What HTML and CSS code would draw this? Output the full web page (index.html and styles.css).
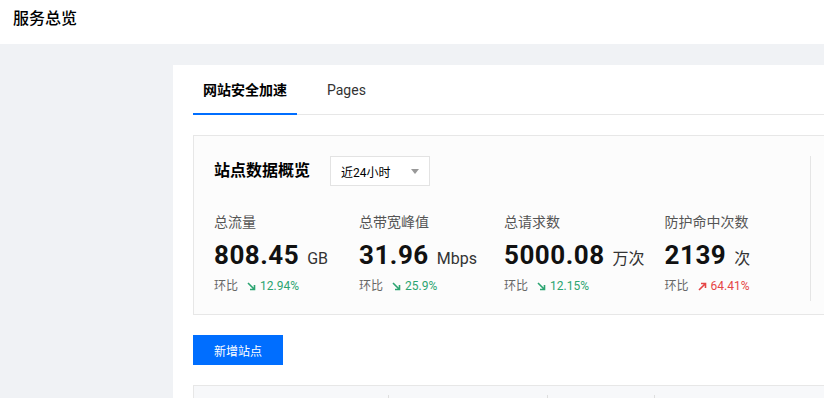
FILE: index.html
```html
<!DOCTYPE html>
<html lang="zh-CN">
<head>
    <meta charset="UTF-8">
    <meta name="viewport" content="width=device-width, initial-scale=1.0">
    <title>服务总览</title>
    <link rel="stylesheet" href="styles.css">
</head>
<body>

    <header class="topbar">
        <h1>服务总览</h1>
    </header>

    <main class="content">
        <div class="panel">
            <div class="tabs">
                <div class="tab active">网站安全加速</div>
                <div class="tab">Pages</div>
            </div>

            <section class="overview">
                <div class="overview-main">
                    <div class="overview-head">
                        <h2>站点数据概览</h2>
                        <div class="select">
                            <span>近24小时</span>
                            <span class="caret"></span>
                        </div>
                    </div>

                    <div class="stats">
                        <div class="stat">
                            <div class="stat-label">总流量</div>
                            <div class="stat-value">808.45<span class="unit">GB</span></div>
                            <div class="stat-change">环比
                                <span class="trend down">
                                    <svg width="9" height="9" viewBox="0 0 9 9"><path d="M1 1L7.5 7.5M3 7.5H7.5V3" fill="none" stroke="currentColor" stroke-width="1.6"/></svg>12.94%
                                </span>
                            </div>
                        </div>
                        <div class="stat">
                            <div class="stat-label">总带宽峰值</div>
                            <div class="stat-value">31.96<span class="unit">Mbps</span></div>
                            <div class="stat-change">环比
                                <span class="trend down">
                                    <svg width="9" height="9" viewBox="0 0 9 9"><path d="M1 1L7.5 7.5M3 7.5H7.5V3" fill="none" stroke="currentColor" stroke-width="1.6"/></svg>25.9%
                                </span>
                            </div>
                        </div>
                        <div class="stat">
                            <div class="stat-label">总请求数</div>
                            <div class="stat-value">5000.08<span class="unit">万次</span></div>
                            <div class="stat-change">环比
                                <span class="trend down">
                                    <svg width="9" height="9" viewBox="0 0 9 9"><path d="M1 1L7.5 7.5M3 7.5H7.5V3" fill="none" stroke="currentColor" stroke-width="1.6"/></svg>12.15%
                                </span>
                            </div>
                        </div>
                        <div class="stat">
                            <div class="stat-label">防护命中次数</div>
                            <div class="stat-value">2139<span class="unit">次</span></div>
                            <div class="stat-change">环比
                                <span class="trend up">
                                    <svg width="9" height="9" viewBox="0 0 9 9"><path d="M1 8L7.5 1.5M3 1.5H7.5V6" fill="none" stroke="currentColor" stroke-width="1.6"/></svg>64.41%
                                </span>
                            </div>
                        </div>
                    </div>
                </div>
                <div class="overview-side"></div>
            </section>

            <button class="btn-primary">新增站点</button>

            <div class="table">
                <div class="table-head">
                    <div class="th th-1"></div>
                    <div class="th th-2"></div>
                    <div class="th th-3"></div>
                    <div class="th th-4"></div>
                </div>
            </div>
        </div>
    </main>

</body>
</html>
```

FILE: styles.css
```css
/* Global Styles */
body {
    font-family: 'Roboto', 'Noto Sans CJK SC', sans-serif;
    margin: 0;
    padding: 0;
    background: #f0f2f5;
    color: #000;
    overflow: hidden;
    width: 824px;
    height: 398px;
}

.topbar {
    height: 44px;
    background: #fff;
    display: flex;
    align-items: center;
    padding-left: 13px;
}

.topbar h1 {
    margin: 0 0 7px;
    font-size: 16px;
    font-weight: 500;
    line-height: 22px;
    color: #000;
}

.content {
    padding: 21px 0 0 173px;
}

.panel {
    width: 631px;
    background: #fff;
    padding: 0 0 0 20px;
    height: 333px;
    overflow: hidden;
}

/* Tabs */
.tabs {
    display: flex;
    gap: 10px;
    border-bottom: 1px solid #e7e7e7;
    height: 49px;
}

.tab {
    padding: 0 10px;
    font-size: 14px;
    line-height: 20px;
    color: #333;
    display: flex;
    align-items: center;
    margin-bottom: -1px;
    border-bottom: 2px solid transparent;
    padding-top: 2px;
}

.tab + .tab {
    margin-left: 10px;
}

.tab.active {
    font-weight: 700;
    color: #000;
    border-bottom-color: #006eff;
}

/* Overview */
.overview {
    margin-top: 20px;
    border: 1px solid #e7e7e7;
    border-right: none;
    background: #fcfcfc;
    display: flex;
    height: 180px;
    box-sizing: border-box;
}

.overview-main {
    width: 596px;
    padding-left: 20px;
    border-right: 1px solid #e5e5e5;
    margin: 20px 0 13px;
}

.overview-head {
    display: flex;
    align-items: center;
    gap: 20px;
}

.overview-head h2 {
    margin: 0;
    font-size: 16px;
    font-weight: 700;
    line-height: 24px;
    width: 96px;
}

.select {
    width: 100px;
    height: 30px;
    box-sizing: border-box;
    border: 1px solid #e3e3e3;
    background: #fff;
    display: flex;
    align-items: center;
    justify-content: space-between;
    padding: 0 10px 0 10px;
    font-size: 12px;
    color: #000;
}

.caret {
    width: 0;
    height: 0;
    border-left: 4px solid transparent;
    border-right: 4px solid transparent;
    border-top: 5px solid #999;
}

.stats {
    display: flex;
    margin-top: 26px;
}

.stat {
    min-width: 125px;
    margin-right: 20px;
}

.stat-label {
    font-size: 14px;
    line-height: 20px;
    color: #555;
}

.stat-value {
    font-size: 26px;
    font-weight: 700;
    line-height: 34px;
    letter-spacing: 0.5px;
    margin-top: 6px;
    color: #111;
    white-space: nowrap;
}

.unit {
    font-size: 16px;
    font-weight: 400;
    letter-spacing: 0;
    color: #333;
    margin-left: 8px;
}

.stat-change {
    font-size: 12px;
    line-height: 18px;
    color: #666;
    margin-top: 1px;
}

.trend {
    margin-left: 6px;
}

.trend svg {
    margin-right: 4px;
    vertical-align: -1px;
}

.trend.down { color: #2ba471; }
.trend.up { color: #e54545; }

/* Button */
.btn-primary {
    display: block;
    margin-top: 20px;
    width: 90px;
    height: 30px;
    border: none;
    background: #006eff;
    color: #fff;
    font-family: inherit;
    font-size: 12px;
    cursor: pointer;
}

/* Table */
.table {
    margin-top: 20px;
    border: 1px solid #e7e7e7;
    border-right: none;
}

.table-head {
    display: flex;
    height: 12px;
    background: #f7f8fa;
    padding-top: 9px;
    box-sizing: border-box;
}

.th {
    border-right: 1px solid #dedede;
    height: 3px;
}

.th-1 { width: 194px; }
.th-2 { width: 158px; }
.th-3 { width: 106px; }
.th-4 { width: 150px; border-right: none; }
```
